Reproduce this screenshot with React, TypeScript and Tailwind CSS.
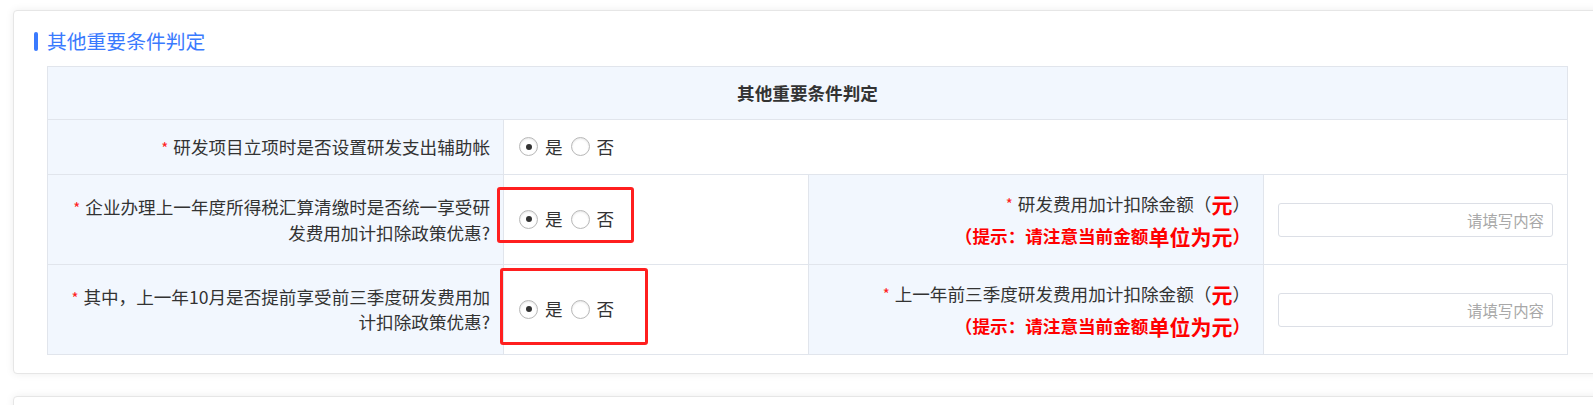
import React from "react";

const FONT = '"Microsoft YaHei", "Noto Sans CJK SC", "Noto Sans", sans-serif';

function Star() {
  return <span className="mr-[5px] text-[15px] text-[#ff2020]">*</span>;
}

function Radio({ checked, label }: { checked?: boolean; label: string }) {
  return (
    <label className="flex items-center gap-[7px]">
      <span className="flex h-[19px] w-[19px] items-center justify-center rounded-full border border-[#b8b8b8] bg-white shadow-[inset_0_1px_2px_rgba(0,0,0,0.1)]">
        {checked && <span className="h-[6px] w-[6px] rounded-full bg-[#333]" />}
      </span>
      <span className="text-[17.6px] text-[#333]">{label}</span>
    </label>
  );
}

function YesNo() {
  return (
    <div className="flex items-center gap-[8px]">
      <Radio checked label="是" />
      <Radio label="否" />
    </div>
  );
}

function AmountLabel({ title }: { title: string }) {
  return (
    <div className="flex flex-col items-end gap-[6px]">
      <div className="flex items-center leading-[26px] text-[#333]">
        <Star />
        <span>{title}（</span>
        <b className="text-[21px] text-[#ff0000]">元</b>
        <span>）</span>
      </div>
      <div className="flex items-center font-bold leading-[26px] text-[#ff0000]">
        <span className="text-[17.6px]">（提示：请注意当前金额</span>
        <span className="text-[21px]">单位为元</span>
        <span className="text-[17.6px]">）</span>
      </div>
    </div>
  );
}

function AmountInput() {
  return (
    <input
      type="text"
      placeholder="请填写内容"
      className="h-[34px] w-full rounded-[3px] border border-[#dcdfe6] bg-white px-[8px] text-right text-[15.4px] text-[#333] outline-none placeholder:text-[#a8a8a8]"
    />
  );
}

const labelCell =
  "border border-[#e1e5ec] bg-[#f2f7fe] pr-[13px] text-right align-middle text-[17.6px] text-[#333]";
const valueCell = "relative border border-[#e1e5ec] bg-white align-middle";

export default function App() {
  return (
    <div
      className="h-[405px] overflow-hidden bg-white pl-[13px] pt-[10px]"
      style={{ fontFamily: FONT }}
    >
      <div className="w-[1640px] rounded-[4px] border border-[#e6e6e6] bg-white pb-[18px] shadow-[0_0_8px_rgba(0,0,0,0.07)]">
        <div className="mt-[16px] flex h-[28px] items-center gap-[9px] pl-[20px]">
          <span className="h-[19px] w-[4px] rounded-full bg-[#3a7afe]" />
          <span className="text-[19.8px] text-[#3a7afe]">其他重要条件判定</span>
        </div>

        <table className="ml-[33px] mt-[11px] w-[1521px] table-fixed border-collapse">
          <colgroup>
            <col className="w-[456px]" />
            <col className="w-[305px]" />
            <col className="w-[455px]" />
            <col />
          </colgroup>
          <tbody>
            <tr className="h-[53px]">
              <td
                colSpan={4}
                className="border border-[#e1e5ec] bg-[#f2f7fe] text-center text-[17.6px] font-bold text-[#333]"
              >
                其他重要条件判定
              </td>
            </tr>
            <tr className="h-[55px]">
              <td className={labelCell}>
                <Star />
                研发项目立项时是否设置研发支出辅助帐
              </td>
              <td colSpan={3} className={`${valueCell} pl-[15px]`}>
                <YesNo />
              </td>
            </tr>
            <tr className="h-[90px]">
              <td className={`${labelCell} leading-[25px]`}>
                <Star />
                企业办理上一年度所得税汇算清缴时是否统一享受研
                <br />
                发费用加计扣除政策优惠?
              </td>
              <td className={`${valueCell} pl-[15px]`}>
                <YesNo />
                <div className="absolute left-[-7px] top-[12px] h-[56px] w-[137px] rounded-[3px] border-[3px] border-[#ff1f1f]" />
              </td>
              <td className={labelCell}>
                <AmountLabel title="研发费用加计扣除金额" />
              </td>
              <td className={`${valueCell} px-[14px]`}>
                <AmountInput />
              </td>
            </tr>
            <tr className="h-[90px]">
              <td className={`${labelCell} leading-[24px]`}>
                <Star />
                其中，上一年10月是否提前享受前三季度研发费用加
                <br />
                计扣除政策优惠?
              </td>
              <td className={`${valueCell} pl-[15px]`}>
                <YesNo />
                <div className="absolute left-[-4px] top-[3px] h-[77px] w-[148px] rounded-[3px] border-[3px] border-[#ff1f1f]" />
              </td>
              <td className={labelCell}>
                <AmountLabel title="上一年前三季度研发费用加计扣除金额" />
              </td>
              <td className={`${valueCell} px-[14px]`}>
                <AmountInput />
              </td>
            </tr>
          </tbody>
        </table>
      </div>

      <div className="mt-[22px] h-[40px] w-[1640px] rounded-[4px] border border-[#e6e6e6] bg-white shadow-[0_0_8px_rgba(0,0,0,0.07)]" />
    </div>
  );
}
